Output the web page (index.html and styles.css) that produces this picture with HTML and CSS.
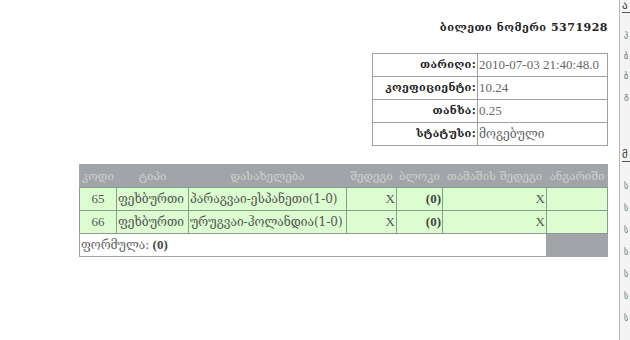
FILE: index.html
```html
<!DOCTYPE html>
<html lang="ka">
<head>
<meta charset="utf-8">
<title>ბილეთი</title>
<link rel="stylesheet" href="styles.css">
</head>
<body>
<div class="page">
  <main class="main">
    <h1 class="ticket-title">ბილეთი ნომერი 5371928</h1>
    <table class="info">
      <tr><th>თარიღი:</th><td>2010-07-03 21:40:48.0</td></tr>
      <tr><th>კოეფიციენტი:</th><td>10.24</td></tr>
      <tr><th>თანხა:</th><td>0.25</td></tr>
      <tr><th>სტატუსი:</th><td class="geo">მოგებული</td></tr>
    </table>
    <table class="bets">
      <colgroup>
        <col class="c-code"><col class="c-type"><col class="c-name"><col class="c-res"><col class="c-block"><col class="c-game"><col class="c-acc">
      </colgroup>
      <thead>
        <tr>
          <th>კოდი</th>
          <th>ტიპი</th>
          <th>დასახელება</th>
          <th>შედეგი</th>
          <th>ბლოკი</th>
          <th>თამაშის შედეგი</th>
          <th>ანგარიში</th>
        </tr>
      </thead>
      <tbody>
        <tr>
          <td class="center">65</td>
          <td class="geo">ფეხბურთი</td>
          <td class="geo">პარაგვაი-ესპანეთი(1-0)</td>
          <td class="right">X</td>
          <td class="right"><b>(0)</b></td>
          <td class="right">X</td>
          <td></td>
        </tr>
        <tr>
          <td class="center">66</td>
          <td class="geo">ფეხბურთი</td>
          <td class="geo">ურუგვაი-ჰოლანდია(1-0)</td>
          <td class="right">X</td>
          <td class="right"><b>(0)</b></td>
          <td class="right">X</td>
          <td></td>
        </tr>
        <tr class="foot">
          <td colspan="6"><span class="geo">ფორმულა:</span> <b>(0)</b></td>
          <td class="empty"></td>
        </tr>
      </tbody>
    </table>
  </main>
  <aside class="side">
    <section class="side-block">
      <h2 class="side-head">ა</h2>
      <ul class="side-list">
        <li>პ</li>
        <li>ბ</li>
        <li>ბ</li>
        <li>გ</li>
      </ul>
    </section>
    <section class="side-block second">
      <h2 class="side-head">მ</h2>
      <ul class="side-list long">
        <li>ს</li>
        <li>ს</li>
        <li>ს</li>
        <li>ს</li>
        <li>ს</li>
        <li>ს</li>
        <li>ს</li>
      </ul>
    </section>
  </aside>
</div>
</body>
</html>
```
FILE: styles.css
```css
html, body {
  margin: 0;
  padding: 0;
  background: #ffffff;
  overflow: hidden;
}
body {
  font-family: "Liberation Serif", "DejaVu Serif", serif;
  font-size: 13px;
  color: #555;
}
.page {
  display: flex;
  width: 630px;
  height: 340px;
}
.main {
  flex: 0 0 608px;
  padding-right: 11px;
  display: flex;
  flex-direction: column;
  align-items: flex-end;
}
.ticket-title {
  margin: 20px 0 0 0;
  font-family: "DejaVu Serif", serif;
  font-size: 11px;
  font-weight: bold;
  letter-spacing: 0.5px;
  color: #222;
  line-height: 16px;
}
.info {
  margin-top: 17px;
  border-collapse: collapse;
}
.info th, .info td {
  border: 1px solid #a0a0a0;
  height: 22px;
  padding: 0 1px;
  line-height: 16px;
}
.info th {
  text-align: right;
  font-family: "DejaVu Serif", serif;
  font-size: 11px;
  letter-spacing: 0.3px;
  color: #222;
  width: 102px;
}
.info td {
  text-align: left;
  color: #666;
  width: 127px;
}
.geo {
  font-family: "DejaVu Serif", serif;
  font-size: 12px;
  color: #666;
  font-weight: 300;
}
.bets {
  margin-top: 18px;
  width: 528px;
  table-layout: fixed;
  border-collapse: collapse;
  background: #a1a5a9;
}
.bets th {
  height: 23px;
  padding: 0;
  font-weight: normal;
  font-family: "DejaVu Serif", serif;
  font-size: 11.5px;
  color: #cdd1cd;
  text-align: center;
  white-space: nowrap;
  overflow: hidden;
}
.bets td {
  height: 22px;
  padding: 0 1px;
  border: 1px solid #8c9c8c;
  background: #dbfdcf;
  color: #555;
  white-space: nowrap;
  overflow: hidden;
}
.c-code { width: 37px; }
.c-type { width: 72px; }
.c-name { width: 158px; }
.c-res { width: 50px; }
.c-block { width: 46px; }
.c-game { width: 104px; }
.c-acc { width: 61px; }
.center { text-align: center; }
.right { text-align: right; }
.bets b { color: #444; }
.bets .foot td {
  background: #ffffff;
  border: 1px solid #a0a0a0;
  border-top: none;
}
.bets .foot td.empty {
  background: #a1a5a9;
  border: none;
}
.side {
  flex: 0 0 10px;
  border-left: 1px solid #b8b8b8;
  background: #f4f4f4;
  padding-left: 2px;
  overflow: hidden;
}
.side-head {
  margin: 0;
  font-family: "DejaVu Sans", sans-serif;
  font-size: 11px;
  font-weight: normal;
  color: #333;
  line-height: 12px;
  border-bottom: 1px solid #555;
}
.second .side-head {
  margin-top: 42px;
}
.side-list {
  list-style: none;
  margin: 14px 0 0 0;
  padding: 0 0 0 2px;
  font-family: "DejaVu Sans", sans-serif;
  font-size: 8px;
  color: #666;
}
.side-list li {
  height: 20px;
  line-height: 20px;
}
.side-list.long li {
  height: 22px;
  line-height: 22px;
}
```
